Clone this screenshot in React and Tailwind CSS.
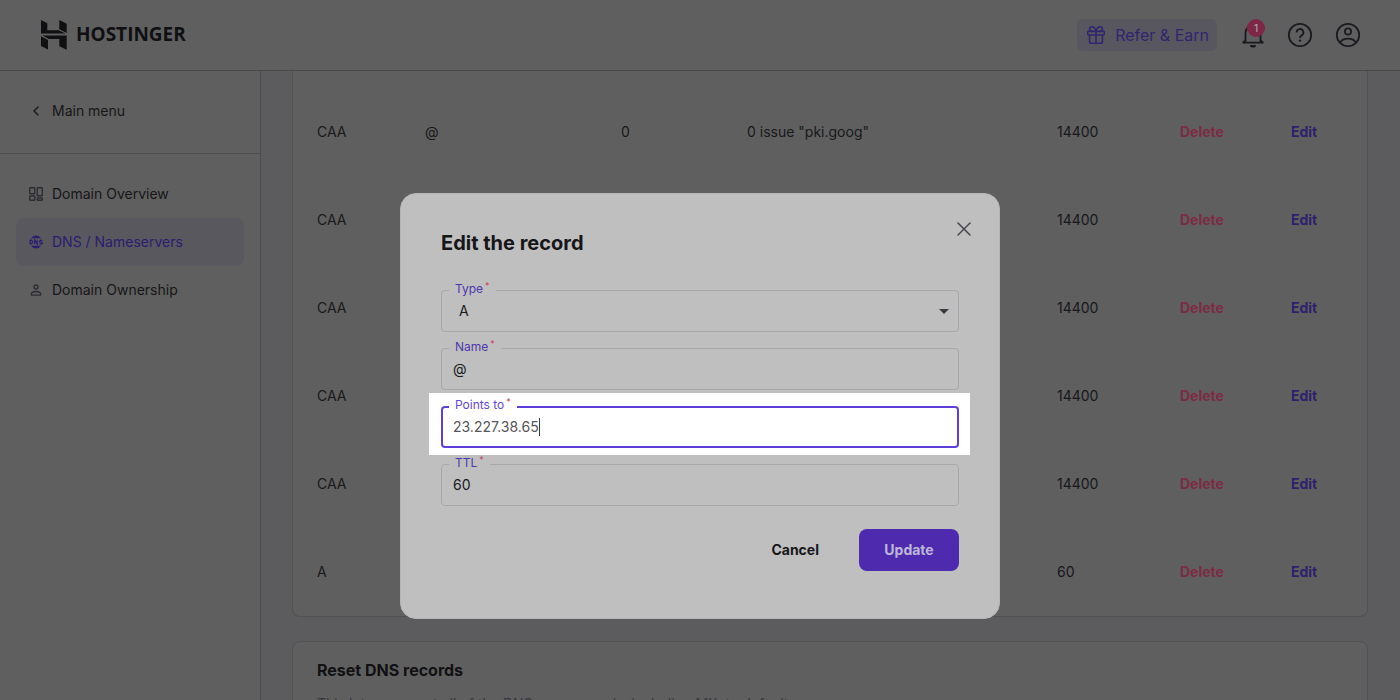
import { useState } from "react";
import { ChevronLeft, Gift, X } from "lucide-react";

const records = [
  { type: "CAA", name: "@", priority: "0", content: '0 issue "pki.goog"', ttl: "14400" },
  { type: "CAA", ttl: "14400" },
  { type: "CAA", ttl: "14400" },
  { type: "CAA", ttl: "14400" },
  { type: "CAA", ttl: "14400" },
  { type: "A", ttl: "60" },
];

const Logo = () => (
  <a href="#home" className="flex items-center gap-2 text-[#101012]">
    <svg width="28" height="30" viewBox="0 0 28 30" fill="currentColor" aria-hidden="true">
      <path d="M1 0l6.300 3.300v7h11.200l7 3.200H1z" />
      <path d="M19.300 0l7.400 3.800V13l-7.400-3.700z" />
      <path d="M1 16.300L8 20v9.500L1 26z" />
      <path d="M26.700 29.800V15.500H2.500L9 19h10.300v7.300z" />
    </svg>
    <span className="font-['Open_Sans',sans-serif] text-[19px] font-bold">HOSTINGER</span>
  </a>
);

const GridIcon = () => (
  <svg width="16" height="16" viewBox="0 0 16 16" fill="none" stroke="currentColor" strokeWidth="1.4">
    <rect x="1.700" y="1.700" width="5" height="6" rx="0.5" />
    <rect x="9.300" y="1.700" width="5" height="8" rx="0.5" />
    <rect x="1.700" y="10" width="5" height="4.300" rx="0.5" />
    <rect x="9.300" y="12" width="5" height="2.300" rx="0.5" />
  </svg>
);

const DnsIcon = () => (
  <svg width="16" height="16" viewBox="0 0 16 16" fill="currentColor">
    <path d="M2.800 4.200a6.500 6.500 0 0 1 10.400 0z" />
    <path d="M2.800 11.800a6.500 6.500 0 0 0 10.400 0z" />
    <path
      d="M2.200 6.200v3.600h.7q1.600 0 1.600-1.800T2.900 6.200zM6.600 10.300V6l2.600 4V5.700M14.300 6.300h-1.700q-1 0-1 .9t1 .8h.7q1 0 1 .9t-1 .9h-1.900"
      fill="none"
      stroke="currentColor"
      strokeWidth="1.200"
    />
  </svg>
);

const PersonIcon = () => (
  <svg width="16" height="16" viewBox="0 0 16 16" fill="none" stroke="currentColor" strokeWidth="1.300">
    <circle cx="8" cy="5" r="2" />
    <path d="M3.400 13.200v-1.200c0-1.700 2.400-2.500 4.600-2.500s4.600.8 4.600 2.500v1.200z" strokeLinejoin="round" />
  </svg>
);

const BellIcon = () => (
  <svg width="24" height="26" viewBox="0 0 24 26" fill="none" stroke="currentColor" strokeWidth="1.800">
    <path d="M1.500 20.700h21M4.500 20V11a7.500 7.500 0 0 1 15 0v9" />
    <path d="M2 20.700l2.500-2.400M22 20.700l-2.500-2.400" />
    <path d="M9 23h6a3 2.600 0 0 1-6 0z" fill="currentColor" stroke="none" />
  </svg>
);

const HelpIcon = () => (
  <svg width="26" height="26" viewBox="0 0 26 26" fill="none" stroke="currentColor" strokeWidth="1.800">
    <circle cx="13" cy="13" r="11.200" />
    <path d="M9.600 10.400a3.400 3.400 0 1 1 5 3c-1.200.7-1.600 1.300-1.600 2.600" />
    <circle cx="13" cy="18.600" r="1.200" fill="currentColor" stroke="none" />
  </svg>
);

const AccountIcon = () => (
  <svg width="26" height="26" viewBox="0 0 26 26" fill="none" stroke="currentColor" strokeWidth="1.800">
    <circle cx="13" cy="13" r="11.200" />
    <circle cx="13" cy="9.500" r="3.100" />
    <path d="M5 20.600c1.600-2.700 4.600-4 8-4s6.400 1.300 8 4" />
  </svg>
);

const Header = () => (
  <header className="flex h-[71px] shrink-0 items-center justify-between border-b border-[#48484a] pr-[39px] pl-10">
    <Logo />
    <div className="flex items-center gap-[22px] text-[#1b1a20]">
      <a href="#refer" className="mr-0.5 flex h-8 items-center gap-2 rounded-md bg-[#58565f] px-2 text-base text-[#30266f]">
        <Gift size={22} strokeWidth={1.75} />
        Refer &amp; Earn
      </a>
      <button type="button" aria-label="Notifications" className="relative">
        <BellIcon />
        <span className="absolute -top-[3px] right-0 flex size-[18px] items-center justify-center rounded-full bg-[#7c2745] text-[10px] font-medium text-[#b0a0a8]">
          1
        </span>
      </button>
      <button type="button" aria-label="Help">
        <HelpIcon />
      </button>
      <button type="button" aria-label="Account">
        <AccountIcon />
      </button>
    </div>
  </header>
);

const Sidebar = () => (
  <aside className="w-[261px] shrink-0 border-r border-[#4d4d51] text-[#161618]">
    <div className="flex h-[83px] items-center border-b border-[#4d4d4f] px-7 pb-0.5">
      <a href="#menu" className="flex items-center gap-2">
        <ChevronLeft size={16} strokeWidth={2} />
        Main menu
      </a>
    </div>
    <nav className="flex flex-col px-4 py-4">
      <a href="#overview" className="flex h-12 items-center gap-2 px-3">
        <span className="text-[#2d2c33]">
          <GridIcon />
        </span>
        Domain Overview
      </a>
      <a href="#dns" className="flex h-12 items-center gap-2 rounded-lg bg-[#59585f] px-3 text-[#2b1d6f]">
        <DnsIcon />
        DNS / Nameservers
      </a>
      <a href="#ownership" className="flex h-12 items-center gap-2 px-3">
        <span className="text-[#2d2c33]">
          <PersonIcon />
        </span>
        Domain Ownership
      </a>
    </nav>
  </aside>
);

const RecordsTable = () => (
  <section className="rounded-b-lg border-x border-b border-[#525254] bg-[#5f5f5f] px-6 pt-[17px]">
    <table className="w-full table-fixed text-left text-[#18181b]">
      <colgroup>
        <col className="w-[108px]" />
        <col className="w-[196px]" />
        <col className="w-[126px]" />
        <col />
        <col className="w-[123px]" />
        <col className="w-[111px]" />
        <col className="w-[52px]" />
      </colgroup>
      <tbody>
        {records.map((record, index) => (
          <tr key={index} className="h-[88px]">
            <td>{record.type}</td>
            <td>{record.name}</td>
            <td>{record.priority}</td>
            <td>{record.content}</td>
            <td>{record.ttl}</td>
            <td>
              <button type="button" className="font-bold text-[#7b2b43]">Delete</button>
            </td>
            <td>
              <button type="button" className="font-bold text-[#2e216c]">Edit</button>
            </td>
          </tr>
        ))}
      </tbody>
    </table>
  </section>
);

// Campo con etiqueta flotante sobre el borde
const Field = ({ id, label, active, children }) => (
  <div className="relative isolate">
    {active && <div className="absolute -top-[13px] -right-[11px] -bottom-[7px] -left-3 -z-10 bg-white" />}
    <div
      className={`flex h-[42px] items-center rounded-sm ${
        active ? "border-2 border-[#5f3fdc] px-2.5" : "border border-[#a8a8aa] pr-[7px] pl-[11px]"
      }`}
    >
      {children}
    </div>
    <label
      htmlFor={id}
      className={`absolute -top-2 left-2 flex px-1.5 text-xs leading-[14px] ${
        active ? "bg-white text-[#6546dc]" : "bg-[#bfbfbf] text-[#4c38ad]"
      }`}
    >
      {label}
      <span className="ml-0.5 text-[9px] leading-2 text-[#d0405f]">*</span>
    </label>
  </div>
);

const EditDialog = () => {
  const [values, setValues] = useState({ type: "A", name: "@", target: "23.227.38.65", ttl: "60" });

  const handleChange = (e) => {
    setValues({ ...values, [e.target.id]: e.target.value });
  };

  return (
    <div className="fixed inset-0 flex items-start justify-center pt-[193px]">
      <div
        role="dialog"
        aria-labelledby="dialog-title"
        className="relative w-full max-w-[600px] rounded-2xl border border-[#b5b5b5] bg-[#bfbfbf] px-10 pt-[33px] pb-[47px]"
      >
        <button type="button" aria-label="Close" className="absolute top-[23px] right-[23px] text-[#46454f]">
          <X size={24} strokeWidth={1.5} />
        </button>
        <h2 id="dialog-title" className="text-xl leading-8 font-bold text-[#161619]">Edit the record</h2>

        <form className="mt-[31px]" onSubmit={(e) => e.preventDefault()}>
          <div className="flex flex-col gap-4 text-[#19191c]">
            <Field id="type" label="Type">
              <select
                id="type"
                value={values.type}
                onChange={handleChange}
                className="h-full w-full appearance-none pl-1.5 outline-none"
              >
                <option>A</option>
                <option>CAA</option>
              </select>
              <svg width="10" height="5" viewBox="0 0 10 5" className="-ml-3 shrink-0" aria-hidden="true">
                <path d="M0 0h10L5 5z" fill="#3a3942" />
              </svg>
            </Field>
            <Field id="name" label="Name">
              <input id="name" value={values.name} onChange={handleChange} className="w-full outline-none" />
            </Field>
            <Field id="target" label="Points to" active>
              <input
                id="target"
                value={values.target}
                onChange={handleChange}
                className="field-sizing-content text-[#55555a] outline-none"
              />
              <span className="h-[18px] w-px bg-[#3a3a3e]" />
            </Field>
            <Field id="ttl" label="TTL">
              <input id="ttl" value={values.ttl} onChange={handleChange} className="w-full outline-none" />
            </Field>
          </div>
          <div className="mt-[23px] flex justify-end gap-4 font-bold">
            <button type="button" className="h-[42px] px-6 text-[#161619]">Cancel</button>
            <button type="submit" className="h-[42px] min-w-[100px] rounded-lg bg-[#4e2bae] px-6 text-[#beb6d8]">
              Update
            </button>
          </div>
        </form>
      </div>
    </div>
  );
};

const App = () => {
  return (
    <div className="flex h-screen flex-col overflow-hidden bg-[#5f5f5f] font-[Inter,'Liberation_Sans',sans-serif] text-sm">
      <Header />
      <div className="flex min-h-0 flex-1">
        <Sidebar />
        <main className="flex-1 overflow-hidden bg-[#5c5c5f] pr-8 pl-[31px]">
          <RecordsTable />
          <section className="mt-6 rounded-lg border border-[#525254] bg-[#5f5f5f] px-6 pt-4 pb-6">
            <h2 className="text-base font-bold text-[#111113]">Reset DNS records</h2>
            <p className="mt-3 text-sm text-[#38383c]">
              This lets you reset all of the DNS zone records, including MX, to default.
            </p>
          </section>
        </main>
      </div>
      <EditDialog />
    </div>
  );
};

export default App;
